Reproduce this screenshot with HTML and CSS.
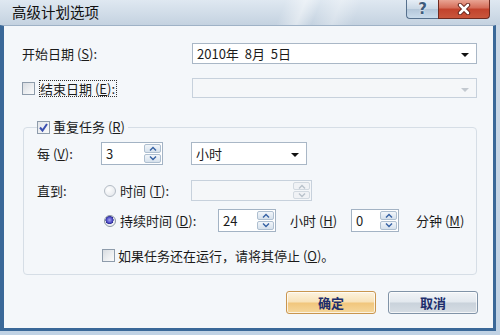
FILE: index.html
```html
<!DOCTYPE html>
<html lang="zh-CN">
<head>
    <meta charset="UTF-8">
    <title>高级计划选项</title>
    <link rel="stylesheet" href="styles.css">
</head>
<body>
    <div class="window">
        <div class="titlebar">
            <span class="title">高级计划选项</span>
            <div class="caption-buttons">
                <span class="cap-btn help">?</span>
                <span class="cap-btn close">
                    <svg width="14" height="12" viewBox="0 0 14 12">
                        <path d="M3 2 L11 10 M11 2 L3 10" stroke="#5a1a12" stroke-width="4.4" stroke-linecap="round"/>
                        <path d="M3 2 L11 10 M11 2 L3 10" stroke="#fff" stroke-width="2.6" stroke-linecap="round"/>
                    </svg>
                </span>
            </div>
        </div>

        <div class="client">
            <div class="row row-start">
                <span class="label-wide">开始日期 (<u>S</u>):</span>
                <div class="combo combo-wide">
                    <span class="combo-text">2010年&nbsp;&nbsp;8月&nbsp;&nbsp;5日</span>
                    <span class="arrow"></span>
                </div>
            </div>

            <div class="row row-end">
                <span class="label-wide check-label">
                    <span class="checkbox"></span>
                    <span class="focus-text">结束日期 (<u>E</u>):</span>
                </span>
                <div class="combo combo-wide disabled">
                    <span class="combo-text"></span>
                    <span class="arrow"></span>
                </div>
            </div>

            <fieldset class="group">
                <legend class="check-label">
                    <span class="checkbox checked">
                        <svg width="11" height="11" viewBox="0 0 11 11">
                            <path d="M2 5.5 L4.5 8.5 L9 2" fill="none" stroke="#3a4fb0" stroke-width="2"/>
                        </svg>
                    </span>
                    重复任务 (<u>R</u>)
                </legend>

                <div class="grow row-every">
                    <span class="label-col">每 (<u>V</u>):</span>
                    <div class="spin spin-every">
                        <span class="spin-text">3</span>
                        <span class="spin-btns">
                            <span class="spin-up"><svg width="8" height="5" viewBox="0 0 8 5"><path d="M1 4.5 L4 1.5 L7 4.5" fill="none" stroke="#3561a3" stroke-width="1.4"/></svg></span>
                            <span class="spin-down"><svg width="8" height="5" viewBox="0 0 8 5"><path d="M1 0.5 L4 3.5 L7 0.5" fill="none" stroke="#3561a3" stroke-width="1.4"/></svg></span>
                        </span>
                    </div>
                    <div class="combo combo-unit">
                        <span class="combo-text">小时</span>
                        <span class="arrow"></span>
                    </div>
                </div>

                <div class="grow row-until">
                    <span class="label-col">直到:</span>
                    <span class="radio-item radio-time">
                        <span class="radio"></span>
                        时间 (<u>T</u>):
                    </span>
                    <div class="spin spin-time disabled">
                        <span class="spin-text"></span>
                        <span class="spin-btns">
                            <span class="spin-up"><svg width="8" height="5" viewBox="0 0 8 5"><path d="M1 4.5 L4 1.5 L7 4.5" fill="none" stroke="#b9c2cb" stroke-width="1.4"/></svg></span>
                            <span class="spin-down"><svg width="8" height="5" viewBox="0 0 8 5"><path d="M1 0.5 L4 3.5 L7 0.5" fill="none" stroke="#b9c2cb" stroke-width="1.4"/></svg></span>
                        </span>
                    </div>
                </div>

                <div class="grow row-duration">
                    <span class="label-col"></span>
                    <span class="radio-item radio-duration">
                        <span class="radio checked"></span>
                        持续时间 (<u>D</u>):
                    </span>
                    <div class="spin spin-hours">
                        <span class="spin-text">24</span>
                        <span class="spin-btns">
                            <span class="spin-up"><svg width="8" height="5" viewBox="0 0 8 5"><path d="M1 4.5 L4 1.5 L7 4.5" fill="none" stroke="#3561a3" stroke-width="1.4"/></svg></span>
                            <span class="spin-down"><svg width="8" height="5" viewBox="0 0 8 5"><path d="M1 0.5 L4 3.5 L7 0.5" fill="none" stroke="#3561a3" stroke-width="1.4"/></svg></span>
                        </span>
                    </div>
                    <span class="unit unit-hours">小时 (<u>H</u>)</span>
                    <div class="spin spin-minutes">
                        <span class="spin-text">0</span>
                        <span class="spin-btns">
                            <span class="spin-up"><svg width="8" height="5" viewBox="0 0 8 5"><path d="M1 4.5 L4 1.5 L7 4.5" fill="none" stroke="#3561a3" stroke-width="1.4"/></svg></span>
                            <span class="spin-down"><svg width="8" height="5" viewBox="0 0 8 5"><path d="M1 0.5 L4 3.5 L7 0.5" fill="none" stroke="#3561a3" stroke-width="1.4"/></svg></span>
                        </span>
                    </div>
                    <span class="unit unit-minutes">分钟 (<u>M</u>)</span>
                </div>

                <div class="grow row-stop">
                    <span class="check-label">
                        <span class="checkbox"></span>
                        如果任务还在运行，请将其停止 (<u>O</u>)。
                    </span>
                </div>
            </fieldset>

            <div class="buttons">
                <button class="btn btn-default">确定</button>
                <button class="btn">取消</button>
            </div>
        </div>
    </div>
</body>
</html>
```

FILE: styles.css
```css
* {
    box-sizing: border-box;
}

body {
    margin: 0;
    font-family: "Noto Sans CJK SC", "Noto Sans", sans-serif;
    font-size: 13px;
    color: #1b1b1b;
    background: #c9d8e6;
}

u {
    text-underline-offset: 1px;
}

.window {
    width: 500px;
    height: 335px;
    display: flex;
    flex-direction: column;
    background: linear-gradient(to bottom, #cbd8e5, #c0d2e4);
}

/* title bar */

.titlebar {
    height: 25px;
    flex-shrink: 0;
    display: flex;
    justify-content: space-between;
    align-items: flex-start;
    padding: 0 10px 0 12px;
    background:
        linear-gradient(112deg, transparent 56%, rgba(255, 255, 255, 0.45) 60%, transparent 63%, rgba(255, 255, 255, 0.3) 67%, transparent 71%),
        linear-gradient(to bottom, #dfe8f1 0%, #cfdbe7 60%, #c4d2e0 100%);
}

.title {
    font-size: 14.5px;
    line-height: 18px;
    padding-top: 3px;
    color: #111;
}

.caption-buttons {
    display: flex;
}

.cap-btn {
    height: 19px;
    display: flex;
    align-items: center;
    justify-content: center;
    border: 1px solid #56708d;
    border-top: none;
}

.help {
    width: 32px;
    border-radius: 0 0 0 4px;
    border-right: none;
    background: linear-gradient(to bottom, #e6eef6 0%, #c9d7e5 50%, #b3c6d9 51%, #c9dbeb 100%);
    color: #3f5c7c;
    font-family: "DejaVu Sans", sans-serif;
    font-size: 15px;
    font-weight: bold;
    text-shadow: 0 0 2px #fff;
}

.close {
    width: 52px;
    border-radius: 0 0 4px 0;
    border-color: #6e2a20;
    background: linear-gradient(to bottom, #e9a493 0%, #d46b57 45%, #c2422c 50%, #c9563c 100%);
}

/* client area */

.client {
    flex: 1;
    margin: 0 4px 4px 0;
    border: 3px solid #3a6898;
    border-left-width: 4px;
    border-top: 1px solid #9fb2c6;
    background: #f4f7fa;
    padding: 17px 15px 0 18px;
}

.row {
    display: flex;
    align-items: center;
}

.row-start {
    height: 21px;
}

.row-end {
    height: 20px;
    margin-top: 14px;
}

.label-wide {
    width: 170px;
    flex-shrink: 0;
}

.check-label {
    display: flex;
    align-items: center;
}

.focus-text {
    margin-left: 2px;
    outline: 1px dotted #333;
    line-height: 15px;
    padding-right: 1px;
}

/* combo boxes */

.combo {
    height: 100%;
    display: flex;
    align-items: center;
    justify-content: space-between;
    border: 1px solid #a9b7c6;
    background: #fff;
    padding: 0 7px 0 4px;
}

.combo-wide {
    width: 285px;
}

.combo.disabled {
    border-color: #c7d1dc;
    background: #f5f7f9;
}

.arrow {
    width: 0;
    height: 0;
    margin-top: 3px;
    border-left: 4px solid transparent;
    border-right: 4px solid transparent;
    border-top: 4px solid #111;
}

.combo.disabled .arrow {
    border-top-color: #c3c9d0;
}

.combo-unit {
    width: 116px;
    margin-left: 28px;
}

/* repeat group */

.group {
    width: 454px;
    margin: 21px 0 0 1px;
    padding: 7px 0 11px 13px;
    border: 1px solid #d6dee6;
    border-radius: 4px;
}

.group legend {
    padding: 0 3px 0 0;
    line-height: 16px;
}

.grow {
    display: flex;
    align-items: center;
}

.row-every {
    height: 23px;
}

.row-until {
    height: 21px;
    margin-top: 15px;
}

.row-duration {
    height: 23px;
    margin-top: 8px;
}

.row-stop {
    height: 16px;
    margin-top: 15px;
    padding-left: 65px;
}

.label-col {
    width: 64px;
    flex-shrink: 0;
}

/* checkbox and radio */

.checkbox {
    width: 13px;
    height: 13px;
    flex-shrink: 0;
    margin-right: 3px;
    border: 1px solid #8e9cab;
    background: linear-gradient(135deg, #d8dce1 0%, #eef0f2 60%, #fbfbfb 100%);
    display: flex;
    align-items: center;
    justify-content: center;
}

.checkbox.checked {
    background: linear-gradient(135deg, #e3e6ea 0%, #f8f9fa 100%);
}

.radio-item {
    display: flex;
    align-items: center;
    flex-shrink: 0;
    padding-left: 3px;
}

.radio-time {
    width: 90px;
}

.radio-duration {
    width: 117px;
}

.radio {
    width: 12px;
    height: 12px;
    margin-right: 4px;
    border-radius: 50%;
    border: 1px solid #b4bcc5;
    background: radial-gradient(circle at 35% 35%, #ffffff, #dfe3e8);
}

.radio.checked {
    border-color: #8b95a3;
    background: radial-gradient(circle at 45% 40%, #a9a7f2 0%, #4d4bc6 35%, #2b2a8e 48%, #e8ebef 52%, #ffffff 100%);
}

/* spinners */

.spin {
    height: 100%;
    display: flex;
    align-items: stretch;
    border: 1px solid #a3b3c4;
    background: #fff;
    flex-shrink: 0;
}

.spin-text {
    flex: 1;
    display: flex;
    align-items: center;
    padding-left: 4px;
}

.spin-btns {
    width: 19px;
    display: flex;
    flex-direction: column;
    padding: 1px;
    gap: 1px;
}

.spin-btns span {
    flex: 1;
    display: flex;
    align-items: center;
    justify-content: center;
    border: 1px solid #aebfd0;
    border-radius: 2px;
    background: linear-gradient(to bottom, #f2f6fa, #d6e1ec);
}

.spin.disabled {
    border-color: #c7d1dc;
    background: #f5f7f9;
}

.spin.disabled .spin-btns span {
    border-color: #d2d9e0;
    background: #f0f2f5;
}

.spin-every {
    width: 62px;
}

.spin-time {
    width: 121px;
}

.spin-hours {
    width: 58px;
}

.spin-minutes {
    width: 48px;
}

.unit-hours {
    width: 61px;
    margin-left: 14px;
}

.unit-minutes {
    margin-left: 17px;
}

/* dialog buttons */

.buttons {
    display: flex;
    justify-content: flex-end;
    gap: 12px;
    margin-top: 16px;
}

.btn {
    width: 90px;
    height: 23px;
    font-family: inherit;
    font-size: 13px;
    font-weight: bold;
    color: #202d6c;
    border: 1px solid #8093a7;
    border-radius: 3px;
    background: linear-gradient(to bottom, #f1f4f7 0%, #e2e8ee 48%, #c9d2db 52%, #d6dde4 100%);
    box-shadow: inset 0 0 0 1px rgba(255, 255, 255, 0.7);
    padding: 0;
}

.btn-default {
    border-color: #c9964f;
    background: linear-gradient(to bottom, #fdf3df 0%, #f8e2b8 48%, #f1c67c 52%, #f5d79c 100%);
}
```
